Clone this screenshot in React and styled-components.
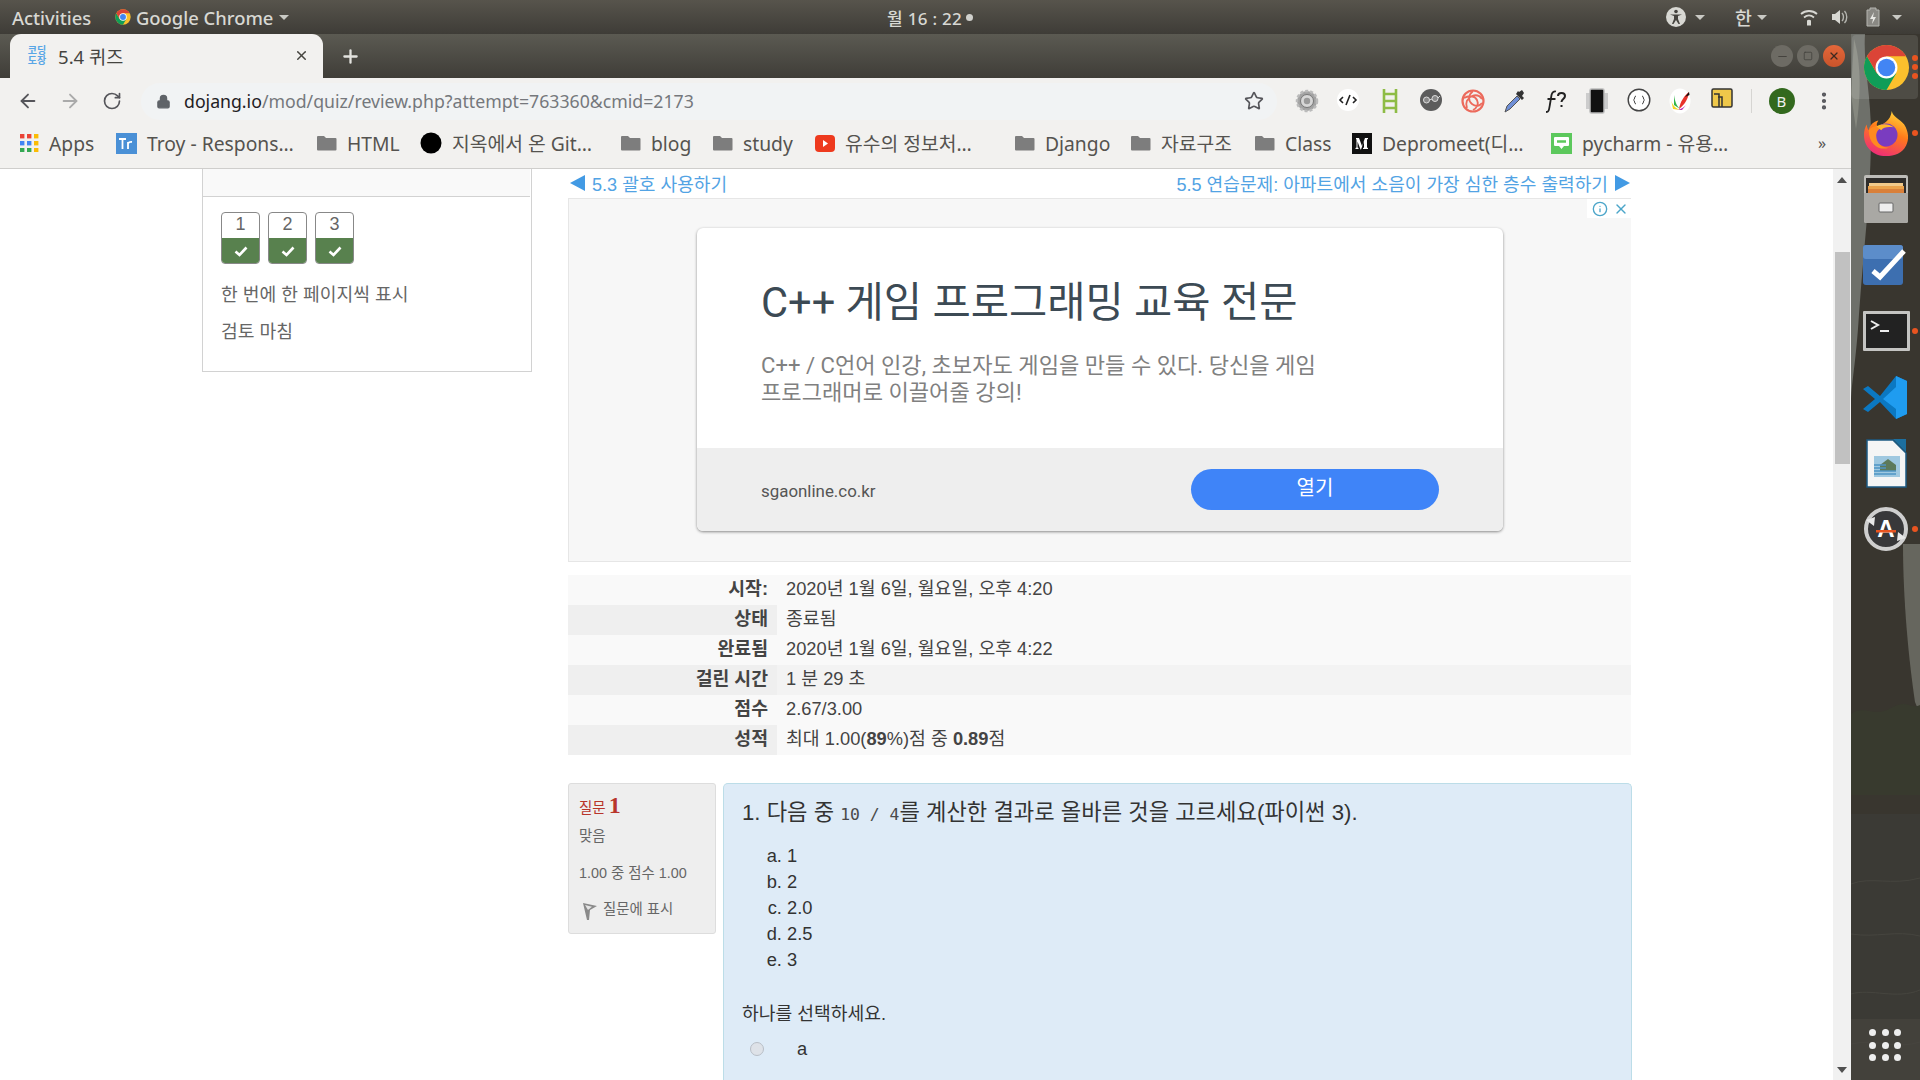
import React from "react";
import styled, { createGlobalStyle } from "styled-components";
import { ArrowLeft, ArrowRight, RotateCw, Star, Lock, X, Plus, Minus, Square, MoreVertical, Info } from "lucide-react";

const UI = `"Noto Sans", "Noto Sans CJK KR", sans-serif`;
const PAGE = `"Liberation Sans", "Noto Sans CJK KR", sans-serif`;
const AD = `Roboto, "Noto Sans CJK KR", sans-serif`;

const Global = createGlobalStyle`
  html, body { margin: 0; padding: 0; width: 1920px; height: 1080px; overflow: hidden; background: #3a3934; }
  * { box-sizing: border-box; }
`;

const Desktop = styled.div`display: flex; flex-direction: column; width: 1920px; height: 1080px; overflow: hidden;`;

/* ---------- GNOME top bar ---------- */
const TopBar = styled.header`
  display: flex; align-items: center; height: 34px; flex: none; font-family: ${UI};
  background: linear-gradient(#57544c, #3e3c37); color: #d8d8d3; font-size: 18.4px; font-weight: 500;
`;
const TopLeft = styled.div`display: flex; align-items: center; width: 887px; padding-left: 12px;`;
const ActivitiesLabel = styled.span`width: 103px;`;
const AppName = styled.span`margin-left: 5px;`;
const Caret = styled.span`
  display: inline-block; width: 0; height: 0; margin-left: ${p => p.$ml ?? 6}px;
  border-left: 5px solid transparent; border-right: 5px solid transparent; border-top: 5px solid #c9c9c4;
`;
const Clock = styled.div`display: flex; align-items: center; width: 640px; font-size: 17px; letter-spacing: .3px;`;
const ClockDot = styled.span`width: 7px; height: 7px; border-radius: 50%; background: #d0d0cc; margin-left: 4px;`;
const TopRight = styled.div`display: flex; align-items: center; flex: 1;`;
const TrayItem = styled.span`display: flex; align-items: center; margin-left: ${p => p.$ml}px;`;

/* ---------- Main split ---------- */
const Split = styled.div`display: flex; flex: 1; min-height: 0;`;
const Browser = styled.div`display: flex; flex-direction: column; width: 1851px; flex: none; min-height: 0;`;

const TabStrip = styled.div`
  display: flex; align-items: flex-end; height: 44px; flex: none; padding-left: 10px;
  background: linear-gradient(#5b5a52, #3f3d38);
`;
const Tab = styled.div`
  display: flex; align-items: center; width: 313px; height: 44px; padding: 0 14px 2px 17px; background: #f2f1ef;
  border-radius: 11px 11px 0 0; font: 18.6px ${UI}; color: #45443f;
`;
const TabIcon = styled.span`
  display: block; width: 20px; font: 700 10px/10px "Noto Sans CJK KR", sans-serif; color: #59a6e6; text-align: center; margin-right: 11px;
`;
const TabTitle = styled.span`flex: 1;`;
const NewTab = styled.span`display: flex; margin: 0 0 11px 17px; color: #e3e3df;`;
const WindowControls = styled.div`display: flex; gap: 4px; margin: 0 6px 11px auto;`;
const WinBtn = styled.span`
  display: flex; align-items: center; justify-content: center; width: 22px; height: 22px; border-radius: 50%;
  background: ${p => p.$close ? "linear-gradient(#e4673a,#c9542b)" : "#6d6b64"}; color: ${p => p.$close ? "#3f2a20" : "#45433e"};
`;

const Toolbar = styled.div`
  display: flex; align-items: center; height: 46px; flex: none; padding-left: 7px; background: #f2f1ef; color: #5d5d5d;
`;
const NavBtn = styled.span`display: flex; justify-content: center; width: 42px; color: ${p => p.$dim ? "#aaaaaa" : "#55555a"};`;
const Omnibox = styled.div`
  display: flex; align-items: center; width: 1136px; height: 37px; margin-left: 8px; padding: 0 13px 0 15px;
  background: #f1f3f4; border-radius: 19px; font: 17.7px ${UI}; color: #75787c;
`;
const LockWrap = styled.span`display: flex; color: #5f6368; margin-right: 13px;`;
const UrlHost = styled.span`color: #1f2023;`;
const UrlRest = styled.span`flex: 1;`;
const Ext = styled.span`display: flex; justify-content: center; width: 41.5px; flex: none;`;
const ExtList = styled.div`display: flex; margin-left: 9px;`;
const Divider = styled.span`width: 1px; height: 24px; background: #d6d5d2; margin-left: 8px;`;
const Avatar = styled.span`
  display: flex; align-items: center; justify-content: center; width: 26px; height: 26px; margin-left: 17px; border-radius: 50%;
  background: #33691e; color: #f0f0f0; font: 15px ${UI};
`;
const Dots = styled.span`display: flex; justify-content: center; width: 22px; margin-left: 18px; color: #55555a;`;

const Bookmarks = styled.nav`
  display: flex; align-items: center; height: 45px; flex: none; padding: 0 0 6px 20px; background: #f2f1ef;
  border-bottom: 1px solid #cfcecc; font: 19.3px ${UI}; color: #55534f; white-space: nowrap;
`;
const Bookmark = styled.span`display: flex; align-items: center; gap: 10px; width: ${p => p.$w}px; flex: none;`;
const More = styled.span`margin-left: 60px; font-size: 16px;`;

/* ---------- Page ---------- */
const Viewport = styled.div`display: flex; flex: 1; min-height: 0; overflow: hidden;`;
const Page = styled.main`
  display: flex; gap: 36px; width: 1833px; padding-left: 202px; background: #fff; overflow: hidden;
  font-family: ${PAGE}; color: #444;
`;
const Sidebar = styled.aside`width: 330px; height: 203px; flex: none; border: 1px solid #d2d2d2; border-top: 0;`;
const SideHead = styled.div`
  height: 28px; overflow: hidden; background: #f9f9f9; border-bottom: 1px solid #d2d2d2; margin-right: 1px;
  padding-left: 30px; font-size: 18px; line-height: 22px; color: #cf8a73;
`;
const SideClip = styled.div`margin-top: -20px;`;
const SideBody = styled.div`padding: 15px 18px 0;`;
const Boxes = styled.div`display: flex; gap: 8px;`;
const QBox = styled.div`width: 39px; height: 52px; border: 1px solid #888; border-radius: 4px; overflow: hidden; background: #fff;`;
const QNum = styled.div`height: 25px; font-size: 18px; line-height: 23px; text-align: center; color: #666;`;
const QState = styled.div`display: flex; align-items: center; justify-content: center; height: 26px; background: #58814e; color: #fff;`;
const SideLink = styled.div`font-size: 18.2px; line-height: 24px; color: #666; margin-top: ${p => p.$mt}px;`;

const Content = styled.section`width: 1064px; flex: none;`;
const PageNav = styled.div`display: flex; justify-content: space-between; align-items: center; height: 29px; width: 1063px; padding: 0 1px 2px 2px; font-size: 18.1px; color: #52a3e4;`;
const NavLink = styled.span`display: flex; align-items: center; gap: 7px;`;
const Tri = styled.span`
  width: 0; height: 0; border-top: 8px solid transparent; border-bottom: 8px solid transparent;
  ${p => p.$right ? "border-left: 15px solid #429ae4;" : "border-right: 15px solid #429ae4;"}
`;
const AdFrame = styled.div`
  position: relative; display: flex; justify-content: center; width: 1063px; height: 364px; padding-top: 29px;
  background: #f7f7f7; border: 1px solid #e6e6e6; border-right: 0; font-family: ${AD};
`;
const AdBadge = styled.div`
  position: absolute; top: 0; right: 0; display: flex; align-items: center; gap: 5px; padding: 2px 2px 1px 5px; background: #fff; color: #4ba5c9;
`;
const AdCard = styled.article`width: 806px; height: 303px; border-radius: 6px; overflow: hidden; background: #fff; box-shadow: 0 1px 3px rgba(0,0,0,.45);`;
const AdBody = styled.div`height: 220px; padding: 52px 64px 0;`;
const AdTitle = styled.h2`margin: 0; font-size: 41.6px; line-height: 46px; font-weight: 400; color: #3c4a54;`;
const AdDesc = styled.p`margin: 26px 0 0; width: 600px; font-size: 22.1px; line-height: 27px; color: #808080; word-break: keep-all;`;
const AdFoot = styled.div`display: flex; align-items: center; justify-content: space-between; height: 83px; padding: 0 64px; background: #eeeeee;`;
const AdDomain = styled.span`font-size: 16.9px; color: #555; margin-top: 2px;`;
const AdBtn = styled.span`
  display: flex; align-items: center; justify-content: center; width: 248px; height: 41px; padding-bottom: 6px; border-radius: 21px;
  background: #3f84f8; color: #fff; font-size: 20px;
`;

const Summary = styled.div`width: 1063px; margin-top: 13px; font-size: 18.3px;`;
const SumRow = styled.div`display: flex; height: 30px; line-height: 27px; background: ${p => p.$full ? "#f3f3f3" : "#f9f9f9"};`;
const SumLabel = styled.div`width: 209px; padding-right: 9px; text-align: right; font-weight: 700; background: ${p => p.$shade ? "#efefef" : "transparent"};`;
const SumValue = styled.div`padding-left: 9px;`;

const QRow = styled.div`display: flex; gap: 7px; margin-top: 28px;`;
const QInfo = styled.div`
  width: 148px; height: 151px; flex: none; padding: 8px 10px; background: #eee; border: 1px solid #ddd; border-radius: 3px; font-size: 14.4px; color: #666;
`;
const QTag = styled.div`display: flex; align-items: baseline; gap: 3px; height: 29px; color: #b8352b; font-size: 14.5px;`;
const QTagNum = styled.span`font-size: 24px; font-weight: 700; font-family: "Liberation Serif", serif;`;
const QMeta = styled.div`line-height: 20px; margin-top: ${p => p.$mt}px;`;
const FlagRow = styled.div`display: flex; align-items: flex-start; gap: 6px; margin: 16px 0 0 3px; line-height: 20px;`;
const QMain = styled.div`
  flex: 1; height: 320px; padding: 14px 18px; background: #deebf7; border: 1px solid #bcdde8; border-bottom: 0; border-radius: 5px 5px 0 0; color: #333;
`;
const QTitle = styled.div`font-size: 22.2px; line-height: 30px;`;
const Code = styled.code`font: 16.4px "DejaVu Sans Mono", monospace; white-space: pre; color: #4a4a4a;`;
const Choices = styled.ol`margin: 15px 0 0; padding: 0 0 0 45px; list-style: lower-alpha; font-size: 18.3px; line-height: 26px;`;
const Prompt = styled.div`margin-top: 28px; font-size: 18.2px; line-height: 26px;`;
const RadioRow = styled.div`display: flex; align-items: center; height: 30px; margin-top: ${p => p.$mt}px; font-size: 18.3px;`;
const Radio = styled.span`width: 14px; height: 14px; margin-left: 8px; border-radius: 50%; background: #dee2e8; border: 1px solid #b8bec6;`;
const RadioLabel = styled.span`margin-left: 33px;`;

/* ---------- scrollbar ---------- */
const Scrollbar = styled.div`display: flex; flex-direction: column; width: 18px; flex: none; background: #f1f1f1;`;
const ScrollArrow = styled.span`
  width: 0; height: 0; margin: ${p => p.$down ? "auto 0 7px 4px" : "8px 0 0 4px"}; border-left: 5px solid transparent; border-right: 5px solid transparent;
  ${p => p.$down ? "border-top: 6px solid #505050;" : "border-bottom: 6px solid #505050;"}
`;
const Thumb = styled.span`width: 15px; height: 212px; margin: 69px 0 0 2px; background: #c1c1c1;`;

/* ---------- dock ---------- */
const Dock = styled.aside`position: relative; flex: 1; display: flex; flex-direction: column; overflow: hidden; background: #3a3832;`;
const Wallpaper = styled.svg`position: absolute; inset: 0; width: 69px; height: 1046px;`;
const DockItem = styled.div`
  position: relative; display: flex; align-items: center; height: 66px; flex: none; padding-left: ${p => p.$pl ?? 12}px;
  ${p => p.$active && "background: rgba(255,255,255,.11); border-radius: 4px; margin: 1px 2px 0 1px; height: 64px; padding-left: 11px; margin-bottom: 1px;"}
`;
const Running = styled.div`position: absolute; right: ${p => p.$active ? 0 : 2}px; top: 50%; transform: translateY(-50%); display: flex; flex-direction: column; gap: 3px;`;
const RunDot = styled.span`width: 6px; height: 6px; border-radius: 50%; background: #e95420;`;
const AppGrid = styled.div`
  position: relative; display: grid; grid-template-columns: repeat(3, 7px); gap: 5.5px; margin: auto 0 19px 18px;
`;
const GridDot = styled.span`width: 7px; height: 7px; border-radius: 50%; background: #eeeeee;`;

/* ---------- drawings ---------- */
const ChromeLogo = ({ s = 48 }) => (
  <svg width={s} height={s} viewBox="0 0 48 48">
    <circle cx="24" cy="24" r="23" fill="#fbc02d" />
    <path d="M4.1 12.5A23 23 0 0 0 24 47L33.96 29.75H14.04Z" fill="#0f9d58" />
    <path d="M4.1 12.5A23 23 0 0 1 43.9 12.5H24L14.04 29.75Z" fill="#db4437" />
    <circle cx="24" cy="24" r="11.2" fill="#fff" />
    <circle cx="24" cy="24" r="8.9" fill="#4285f4" />
  </svg>
);
const FolderIcon = () => (
  <svg width="20" height="16" viewBox="0 0 20 16"><path d="M1 1h6l2 2h9.5a1 1 0 0 1 1 1v10.5a1 1 0 0 1-1 1H1a1 1 0 0 1-1-1V2a1 1 0 0 1 1-1z" fill="#7d7d7d" /></svg>
);
const AppsIcon = () => (
  <svg width="19" height="18" viewBox="0 0 19 18">
    {["#ea4335","#ea4335","#fbbc05","#4285f4","#4285f4","#fbbc05","#34a853","#34a853","#fbbc05"].map((c, i) => (
      <rect key={i} x={(i % 3) * 7} y={Math.floor(i / 3) * 7} width="4.4" height="4.4" fill={c} />
    ))}
  </svg>
);
const TroyIcon = () => (
  <svg width="21" height="21" viewBox="0 0 21 21"><rect width="21" height="21" fill="#4a90d6" /><path d="M3 6h7M6.500 6v10M12 9v7M12 10.500c1-1.500 2.500-1.700 4-1.500" stroke="#fff" strokeWidth="1.800" fill="none" /></svg>
);
const YouTubeIcon = () => (
  <svg width="20" height="17" viewBox="0 0 20 17"><rect width="20" height="17" rx="4" fill="#ee3a1e" /><path d="M8 5l5 3.500-5 3.500z" fill="#fff" /></svg>
);
const MediumIcon = () => (
  <svg width="20" height="21" viewBox="0 0 20 21"><rect width="20" height="21" fill="#111" /><path d="M4 5h3l3 8 3-8h3v1l-1 .5v8l1 .5v1h-5v-1l1-.5v-6l-3 8h-.5l-3-8v6l1 .5v1H3.500v-1l1-.5v-8L4 6z" fill="#fff" /></svg>
);
const LineBlogIcon = () => (
  <svg width="21" height="21" viewBox="0 0 21 21"><rect width="21" height="21" fill="#5cc85c" /><path d="M4 4h13a1 1 0 0 1 1 1v7a1 1 0 0 1-1 1h-4l-2.500 3-2.500-3H4a1 1 0 0 1-1-1V5a1 1 0 0 1 1-1z" fill="#fff" /><path d="M6 8.500h9" stroke="#5cc85c" strokeWidth="2.500" /></svg>
);
const exts = [
  <svg width="24" height="26" viewBox="0 0 24 26"><circle cx="12" cy="13" r="10" fill="#a2a2a2" stroke="#bbb" strokeWidth="2.500" strokeDasharray="3 2" /><circle cx="12" cy="13" r="6.500" fill="#d7d7d7" stroke="#777" /><circle cx="12" cy="13" r="3.200" fill="#9a9a9a" /></svg>,
  <svg width="24" height="24" viewBox="0 0 24 24"><circle cx="12" cy="12" r="11" fill="#fff" /><path d="M7 9l-3 3 3 3M17 9l3 3-3 3M14 7l-4 10" stroke="#222" strokeWidth="1.600" fill="none" /></svg>,
  <svg width="18" height="26" viewBox="0 0 18 26"><path d="M3 1v24M15 1v24M3 6h12M3 13h12M3 20h12" stroke="#8ebc45" strokeWidth="2.600" fill="none" /></svg>,
  <svg width="24" height="24" viewBox="0 0 24 24"><circle cx="12" cy="12" r="11" fill="#5c5c5c" /><circle cx="7.500" cy="12" r="3" fill="#888" stroke="#ddd" /><circle cx="16" cy="10.500" r="3" fill="#888" stroke="#ddd" /><path d="M10.500 12l2.500-1M19 10l2-2" stroke="#ddd" /></svg>,
  <svg width="24" height="26" viewBox="0 0 24 26"><circle cx="12" cy="13" r="10.500" fill="none" stroke="#ec6a5c" strokeWidth="2.200" /><path d="M12 3c-5 4-5 10-1 13s8 2 10-1M3 10c5-3 11-2 13 2s0 8-4 10M6 20c-2-5 0-10 5-12s8 0 10 3" fill="none" stroke="#ec6a5c" strokeWidth="1.800" /></svg>,
  <svg width="24" height="26" viewBox="0 0 24 26"><path d="M3 24l2-6L15 8l3 3L8 21z" fill="#6f8fd6" stroke="#555" /><path d="M14 6l6 6 2-2-2-2 2-3-2-3-3 2-1-1z" fill="#333" /></svg>,
  <svg width="26" height="26" viewBox="0 0 26 26"><path d="M3 24c3 0 3-2 4-8l1.500-9c.6-3 2.500-4 4.500-3.500M4.500 11h8" stroke="#222" strokeWidth="1.800" fill="none" /><path d="M15 8c0-4 7-4 7 0 0 3-3.500 3-3.500 6M18.500 17v2" stroke="#222" strokeWidth="2" fill="none" /></svg>,
  <svg width="24" height="26" viewBox="0 0 24 26"><rect x="1" y="5" width="4" height="16" fill="#ccc" /><rect x="19" y="5" width="4" height="16" fill="#ccc" /><rect x="5" y="1" width="14" height="24" rx="1.500" fill="#111" stroke="#bbb" strokeWidth="1.500" /></svg>,
  <svg width="24" height="24" viewBox="0 0 24 24"><circle cx="12" cy="12" r="10.800" fill="#fff" stroke="#444" strokeWidth="1.400" /><path d="M9 8c-2 0-1 4-2.500 4 1.500 0 .5 4 2.500 4M15 8c2 0 1 4 2.500 4-1.500 0-.5 4-2.500 4M10.500 14h.1M12 14h.1M13.500 14h.1" stroke="#444" fill="none" /></svg>,
  <svg width="24" height="26" viewBox="0 0 24 26"><ellipse cx="12" cy="13" rx="10.500" ry="12.500" fill="#fff" /><path d="M3 11c1 6 4 9 9 11l-7-1z" fill="#f5d327" /><path d="M6 7c1 6 2 10 6 14l-6-4z" fill="#33b54a" /><path d="M11 21c1-7 5-13 10-17-1 8-5 13-10 17z" fill="#e8322c" /><path d="M17 9l4-5 .5 3z" fill="#111" /><path d="M10 22c3-1 7-3 9-6l-5 6z" fill="#c02bb5" /></svg>,
  <svg width="22" height="20" viewBox="0 0 22 20"><rect x="1" y="1" width="20" height="18" rx="1.500" fill="#efc84a" stroke="#333" strokeWidth="1.500" /><path d="M3 6h5v13M11 19V9h-4" stroke="#333" strokeWidth="1.500" fill="none" /></svg>,
];

const DockWall = () => (
  <Wallpaper viewBox="0 0 69 1046" preserveAspectRatio="none">
    <rect width="69" height="1046" fill="#39362f" />
    <path d="M0 0h14c-2 30 6 60 6 100 0 60-8 120-12 180-3 50-8 70-8 90z" fill="#6e706a" />
    <path d="M3 5c6 20 8 50 2 90L0 60z" fill="#86887f" />
    <path d="M52 510h17v170l-5-12c-6-40-12-100-12-158z" fill="#66665e" />
    <path d="M0 680c12-10 24 4 40-6s20 2 29-3v90H0z" fill="#383a2e" />
    <path d="M0 780h69v266H0z" fill="#3b3a35" />
    <path d="M0 850c20-8 40 2 69-6M0 900c25 4 45-4 69 2M0 960c20-6 45 6 69-4M0 1010c25-6 45 6 69-2" stroke="#46453f" fill="none" />
    <path d="M0 985h69v61H0z" fill="#47453f" opacity=".7" />
  </Wallpaper>
);
const FirefoxLogo = () => (
  <svg width="46" height="46" viewBox="0 0 48 48">
    <defs>
      <linearGradient id="ff1" x1="0.700" y1="0" x2="0.300" y2="1"><stop offset="0" stopColor="#ffd43a" /><stop offset=".45" stopColor="#ff7a1a" /><stop offset="1" stopColor="#ee2a7b" /></linearGradient>
    </defs>
    <path d="M30 1c1 6 8 8 13 14 5 8 5 16 2 22C41 45 33 48 24 48 10 48 1 38 1 26c0-4 1-8 3-11 0 3 1 5 2 6 1-5 5-9 10-10-2 3-2 5-1 6 6-2 14-6 15-16z" fill="url(#ff1)" />
    <circle cx="24" cy="26" r="12" fill="#7a3cc0" />
    <path d="M6 21c4-5 10-5 14-3-4 2-7 5-6 11 1 7 7 11 13 10-7 4-21-1-21-18z" fill="#ff8a1f" />
    <path d="M14 17c5-3 13-3 18 1-6-1-11 0-13 3z" fill="#ffb52b" />
  </svg>
);
const FilesLogo = () => (
  <svg width="46" height="48" viewBox="0 0 46 48">
    <rect x="1" y="0" width="44" height="48" rx="2" fill="#bdbcb8" />
    <rect x="3" y="3" width="40" height="18" fill="#2e2c2a" />
    <rect x="6" y="8" width="34" height="3" fill="#f0c98a" />
    <rect x="5" y="11" width="36" height="3" fill="#e9a24c" />
    <rect x="5" y="14" width="36" height="4" fill="#d9803a" />
    <path d="M1 18h44v28a2 2 0 0 1-2 2H3a2 2 0 0 1-2-2z" fill="#a9a8a4" />
    <rect x="16" y="28" width="14" height="9" rx="1" fill="#eee" stroke="#666" />
  </svg>
);
const TasksLogo = () => (
  <svg width="44" height="40" viewBox="0 0 44 40">
    <rect width="40" height="40" rx="3" fill="#3d6fb0" />
    <rect width="40" height="14" rx="3" fill="#5c8dca" />
    <path d="M10 26l7 6 24-26" stroke="#fff" strokeWidth="5" fill="none" />
  </svg>
);
const TerminalLogo = () => (
  <svg width="47" height="40" viewBox="0 0 47 40">
    <rect width="47" height="40" rx="1" fill="#c4c4c2" />
    <rect x="3" y="3" width="41" height="34" fill="#222" />
    <path d="M8 10l7 4-7 4" stroke="#eee" strokeWidth="2" fill="none" />
    <path d="M17 20h9" stroke="#eee" strokeWidth="2" />
  </svg>
);
const VSCodeLogo = () => (
  <svg width="45" height="45" viewBox="0 0 45 45">
    <path d="M33 1L17 21 5 11 0 14l12 10L0 34l5 3 12-10 16 17 11-5V6z" fill="#0b78c2" />
    <path d="M33 1l11 5v33l-11 5zM33 12L20 24l13 10z" fill="#1f9cf0" fillRule="evenodd" />
  </svg>
);
const DocLogo = () => (
  <svg width="41" height="49" viewBox="0 0 41 49">
    <path d="M1 1h26l13 13v34H1z" fill="#f5f5f5" stroke="#1d5a82" strokeWidth="1.500" />
    <path d="M27 0h13v13z" fill="#1d6f9f" />
    <rect x="8" y="17" width="26" height="21" fill="#9fc8e0" />
    <path d="M14 26l8-6 8 6v6H14z" fill="#5d7a5a" />
    <path d="M8 26h12M8 29h12M8 32h22M8 35h22" stroke="#4f94c4" strokeWidth="1.400" />
  </svg>
);
const UpdaterLogo = () => (
  <svg width="46" height="46" viewBox="0 0 46 46">
    <circle cx="23" cy="23" r="20" fill="#38383a" stroke="#cfcfcf" strokeWidth="4" />
    <path d="M3 14l9-3-1 9zM43 32l-9 3 1-9z" fill="#e8e8e8" />
    <text x="23" y="31" textAnchor="middle" fontFamily="Liberation Sans" fontWeight="700" fontSize="24" fill="#fff">A</text>
    <rect x="13" y="24" width="20" height="2.500" fill="#e95420" />
  </svg>
);
const FlagIcon = () => (
  <svg width="15" height="18" viewBox="0 0 15 18" style={{ flex: "none", marginTop: 3 }}>
    <path d="M1 1l14 3-7 4-1 10h-2z" fill="#8a8a8a" /><path d="M3 3l7 1.800L6 8z" fill="#e5e5e5" />
  </svg>
);
const CheckIcon = () => (
  <svg width="14" height="11" viewBox="0 0 14 11"><path d="M1.500 5.500l4 3.500 7-7.500" stroke="#fff" strokeWidth="2.600" fill="none" /></svg>
);

const bookmarks = [
  { w: 96, icon: <AppsIcon />, text: "Apps" },
  { w: 201, icon: <TroyIcon />, text: "Troy - Respons…" },
  { w: 103, icon: <FolderIcon />, text: "HTML" },
  { w: 201, icon: <svg width="22" height="22" viewBox="0 0 22 22"><circle cx="11" cy="11" r="10.500" fill="#000" /></svg>, text: "지옥에서 온 Git…" },
  { w: 92, icon: <FolderIcon />, text: "blog" },
  { w: 102, icon: <FolderIcon />, text: "study" },
  { w: 200, icon: <YouTubeIcon />, text: "유수의 정보처…" },
  { w: 116, icon: <FolderIcon />, text: "Django" },
  { w: 124, icon: <FolderIcon />, text: "자료구조" },
  { w: 97, icon: <FolderIcon />, text: "Class" },
  { w: 199, icon: <MediumIcon />, text: "Depromeet(디…" },
  { w: 207, icon: <LineBlogIcon />, text: "pycharm - 유용…" },
];

const summary = [
  { k: "시작:", v: "2020년 1월 6일, 월요일, 오후 4:20" },
  { k: "상태", v: "종료됨", shade: true },
  { k: "완료됨", v: "2020년 1월 6일, 월요일, 오후 4:22" },
  { k: "걸린 시간", v: "1 분 29 초", shade: true, full: true },
  { k: "점수", v: "2.67/3.00" },
  { k: "성적", v: <>최대 1.00(<b>89</b>%)점 중 <b>0.89</b>점</>, shade: true },
];

export default function App() {
  return (
    <Desktop>
      <Global />
      <TopBar>
        <TopLeft>
          <ActivitiesLabel>Activities</ActivitiesLabel>
          <ChromeLogo s={16} />
          <AppName>Google Chrome</AppName>
          <Caret />
        </TopLeft>
        <Clock>월 16 : 22<ClockDot /></Clock>
        <TopRight>
          <TrayItem $ml={139}>
            <svg width="20" height="20" viewBox="0 0 20 20"><circle cx="10" cy="10" r="10" fill="#d8d8d3" /><circle cx="10" cy="4.500" r="1.800" fill="#45433e" /><path d="M4 7.500h12l-4 1.500v3l2 5h-1.500L10 13l-2.500 4H6l2-5V9z" fill="#45433e" /></svg>
            <Caret $ml={9} />
          </TrayItem>
          <TrayItem $ml={30}>한<Caret $ml={5} /></TrayItem>
          <TrayItem $ml={33}>
            <svg width="18" height="18" viewBox="0 0 18 18"><g fill="none" stroke="#d8d8d3" strokeWidth="1.800"><path d="M1 6c4.500-4 11.500-4 16 0" /><path d="M4 9.500c3-2.500 7-2.500 10 0" /></g><path d="M7 12.500c1-1 3-1 4 0v5H7z" fill="#d8d8d3" /></svg>
          </TrayItem>
          <TrayItem $ml={13}>
            <svg width="18" height="18" viewBox="0 0 18 18"><path d="M1 6h3l5-4v14l-5-4H1z" fill="#d8d8d3" /><path d="M11 5c2 2 2 6 0 8M13.500 3c3 3 3 9 0 12" stroke="#b5b5b0" strokeWidth="1.400" fill="none" /></svg>
          </TrayItem>
          <TrayItem $ml={17}>
            <svg width="14" height="20" viewBox="0 0 14 20"><path d="M4 1h6v2h3v16H1V3h3z" fill="#8a8984" stroke="#b5b5b0" /><path d="M8 5l-4 7h3l-1 5 4-7H7z" fill="#e8e8e4" /></svg>
            <Caret $ml={12} />
          </TrayItem>
        </TopRight>
      </TopBar>

      <Split>
        <Browser>
          <TabStrip>
            <Tab>
              <TabIcon>코딩<br />도장</TabIcon>
              <TabTitle>5.4 퀴즈</TabTitle>
              <X size={15} strokeWidth={2.4} />
            </Tab>
            <NewTab><Plus size={21} strokeWidth={2.6} /></NewTab>
            <WindowControls>
              <WinBtn><Minus size={13} strokeWidth={2} /></WinBtn>
              <WinBtn><Square size={10} strokeWidth={2} /></WinBtn>
              <WinBtn $close><X size={12} strokeWidth={2.4} /></WinBtn>
            </WindowControls>
          </TabStrip>

          <Toolbar>
            <NavBtn><ArrowLeft size={22} /></NavBtn>
            <NavBtn $dim><ArrowRight size={22} /></NavBtn>
            <NavBtn><RotateCw size={20} /></NavBtn>
            <Omnibox>
              <LockWrap><Lock size={15} fill="#5f6368" /></LockWrap>
              <UrlHost>dojang.io</UrlHost>
              <UrlRest>/mod/quiz/review.php?attempt=763360&cmid=2173</UrlRest>
              <Star size={20} color="#55555a" />
            </Omnibox>
            <ExtList>{exts.map((e, i) => <Ext key={i}>{e}</Ext>)}</ExtList>
            <Divider />
            <Avatar>B</Avatar>
            <Dots><MoreVertical size={22} strokeWidth={2.6} /></Dots>
          </Toolbar>

          <Bookmarks>
            {bookmarks.map((b, i) => <Bookmark key={i} $w={b.w}>{b.icon}<span>{b.text}</span></Bookmark>)}
            <More>»</More>
          </Bookmarks>

          <Viewport>
            <Page>
              <Sidebar>
                <SideHead><SideClip>퀴즈 탐색 화면</SideClip></SideHead>
                <SideBody>
                  <Boxes>
                    {[1, 2, 3].map(n => (
                      <QBox key={n}><QNum>{n}</QNum><QState><CheckIcon /></QState></QBox>
                    ))}
                  </Boxes>
                  <SideLink $mt={19}>한 번에 한 페이지씩 표시</SideLink>
                  <SideLink $mt={13}>검토 마침</SideLink>
                </SideBody>
              </Sidebar>

              <Content>
                <PageNav>
                  <NavLink><Tri />5.3 괄호 사용하기</NavLink>
                  <NavLink>5.5 연습문제: 아파트에서 소음이 가장 심한 층수 출력하기<Tri $right /></NavLink>
                </PageNav>
                <AdFrame>
                  <AdBadge><Info size={16} /><X size={16} /></AdBadge>
                  <AdCard>
                    <AdBody>
                      <AdTitle>C++ 게임 프로그래밍 교육 전문</AdTitle>
                      <AdDesc>C++ / C언어 인강, 초보자도 게임을 만들 수 있다. 당신을 게임 프로그래머로 이끌어줄 강의!</AdDesc>
                    </AdBody>
                    <AdFoot>
                      <AdDomain>sgaonline.co.kr</AdDomain>
                      <AdBtn>열기</AdBtn>
                    </AdFoot>
                  </AdCard>
                </AdFrame>

                <Summary>
                  {summary.map(r => (
                    <SumRow key={r.k} $full={r.full}>
                      <SumLabel $shade={r.shade}>{r.k}</SumLabel>
                      <SumValue>{r.v}</SumValue>
                    </SumRow>
                  ))}
                </Summary>

                <QRow>
                  <QInfo>
                    <QTag>질문<QTagNum>1</QTagNum></QTag>
                    <QMeta $mt={5}>맞음</QMeta>
                    <QMeta $mt={17}>1.00 중 점수 1.00</QMeta>
                    <FlagRow><FlagIcon />질문에 표시</FlagRow>
                  </QInfo>
                  <QMain>
                    <QTitle>1. 다음 중 <Code>10 / 4</Code>를 계산한 결과로 올바른 것을 고르세요(파이썬 3).</QTitle>
                    <Choices>
                      <li>1</li><li>2</li><li>2.0</li><li>2.5</li><li>3</li>
                    </Choices>
                    <Prompt>하나를 선택하세요.</Prompt>
                    <RadioRow $mt={7}><Radio /><RadioLabel>a</RadioLabel></RadioRow>
                    <RadioRow $mt={8}><Radio /><RadioLabel>b</RadioLabel></RadioRow>
                  </QMain>
                </QRow>
              </Content>
            </Page>
            <Scrollbar>
              <ScrollArrow />
              <Thumb />
              <ScrollArrow $down />
            </Scrollbar>
          </Viewport>
        </Browser>

        <Dock>
          <DockWall />
          <DockItem $active><ChromeLogo s={47} /><Running $active><RunDot /><RunDot /><RunDot /></Running></DockItem>
          <DockItem><FirefoxLogo /><Running><RunDot /></Running></DockItem>
          <DockItem><FilesLogo /></DockItem>
          <DockItem><TasksLogo /></DockItem>
          <DockItem><TerminalLogo /><Running><RunDot /></Running></DockItem>
          <DockItem><VSCodeLogo /></DockItem>
          <DockItem $pl={15}><DocLogo /></DockItem>
          <DockItem><UpdaterLogo /><Running><RunDot /></Running></DockItem>
          <AppGrid>{Array.from({ length: 9 }, (_, i) => <GridDot key={i} />)}</AppGrid>
        </Dock>
      </Split>
    </Desktop>
  );
}
